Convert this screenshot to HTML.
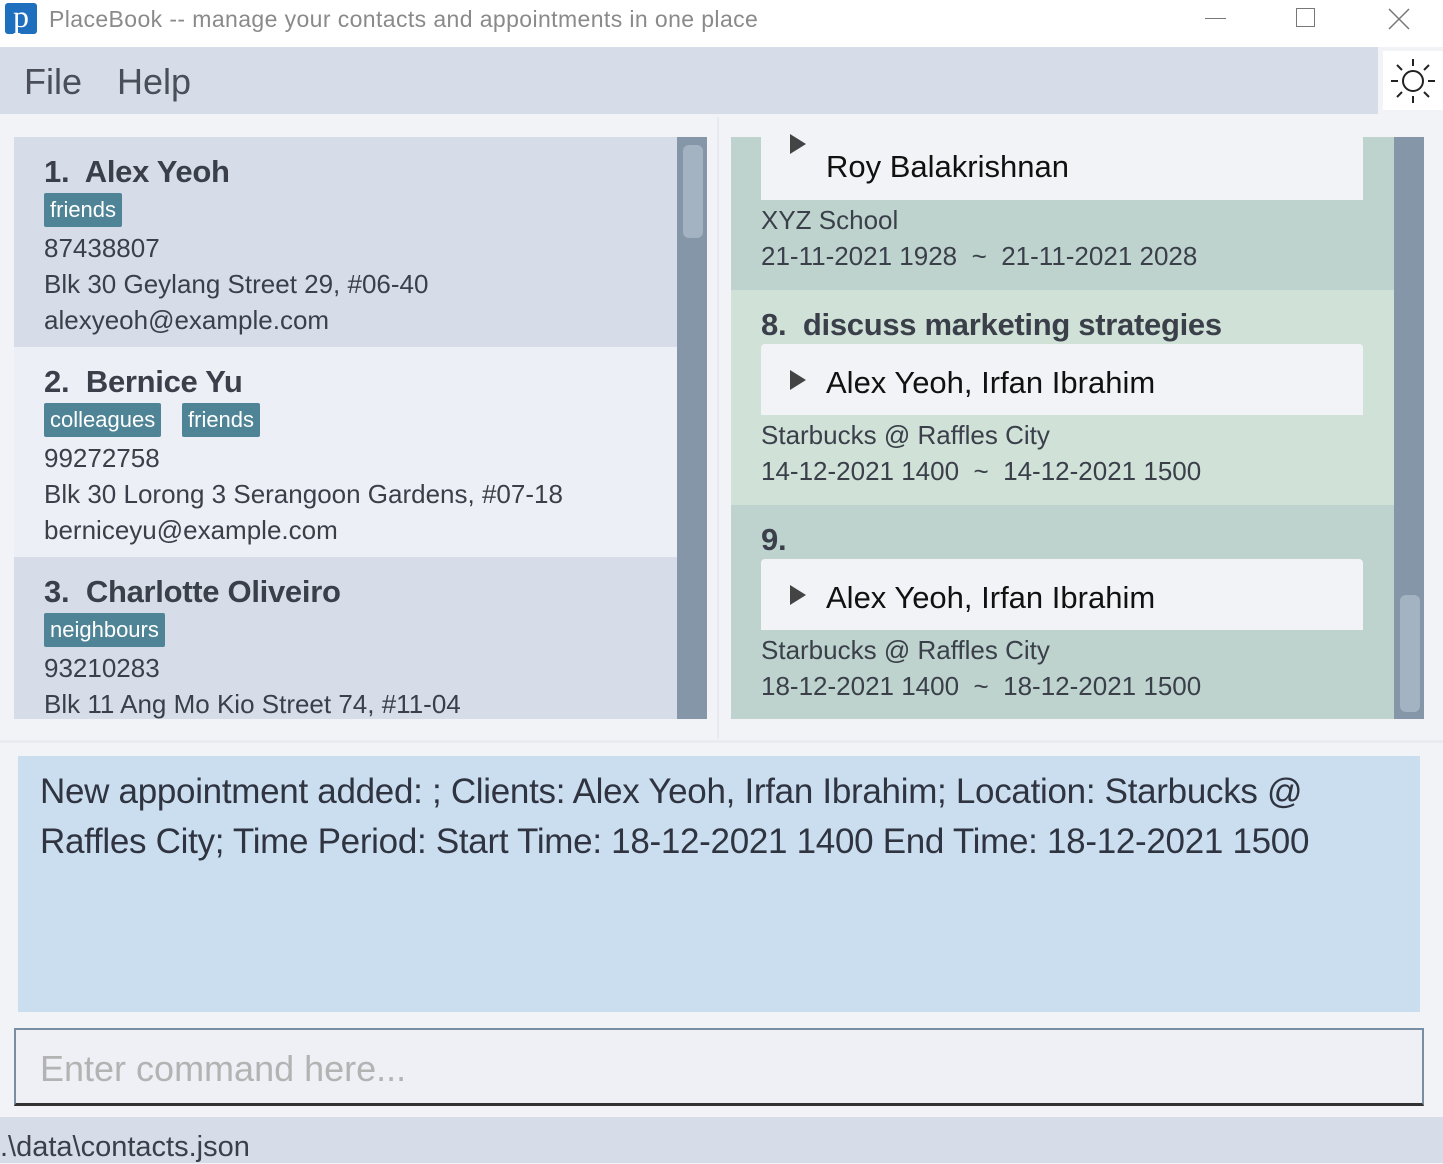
<!DOCTYPE html>
<html><head><meta charset="utf-8"><style>
*{margin:0;padding:0;box-sizing:border-box}
body{width:1443px;height:1163px;position:relative;background:#f1f3f7;font-family:"Liberation Sans","DejaVu Sans",sans-serif;color:#3a3f4a;overflow:hidden}
.a{position:absolute;white-space:nowrap}
.tag{position:absolute;background:#4f8496;color:#fff;font-size:22px;padding:0 6px;height:34px;line-height:33px;border-radius:2px}
.name{font-size:31px;color:#3a3f4a;font-weight:bold;letter-spacing:-0.3px}
.t{font-size:26px;color:#3a3f4a}
.box{position:absolute;left:761px;width:602px;background:#f1f3f7}
.tri{position:absolute;width:0;height:0;border-left:16px solid #444;border-top:10px solid transparent;border-bottom:10px solid transparent}
.cl{font-size:31px;color:#111}
</style></head><body>
<div class="a" style="left:0;top:0;width:1443px;height:47px;background:#fff"></div>
<div class="a" style="left:5px;top:3px;width:32px;height:31px;background:#1f6fbf;border-radius:3px;color:#fff;font-family:'Liberation Serif',serif;font-size:32px;line-height:26px;text-align:center">p</div>
<div class="a" style="left:49px;top:6px;font-size:23px;color:#8a8a8a;letter-spacing:0.4px">PlaceBook -- manage your contacts and appointments in one place</div>
<div class="a" style="left:1205px;top:18px;width:21px;height:1px;background:#777"></div>
<div class="a" style="left:1296px;top:8px;width:19px;height:19px;border:1.5px solid #777"></div>
<svg class="a" style="left:1388px;top:8px" width="22" height="22"><path d="M1 1L21 21M21 1L1 21" stroke="#777" stroke-width="1.5"/></svg>
<div class="a" style="left:0;top:47px;width:1378px;height:67px;background:#d7dde8"></div>
<div class="a" style="left:24px;top:61px;font-size:36px;color:#4a4f5a">File</div>
<div class="a" style="left:117px;top:61px;font-size:36px;color:#4a4f5a">Help</div>
<div class="a" style="left:1383px;top:51px;width:60px;height:59px;background:#fff"></div>
<svg class="a" style="left:1390px;top:58px" width="46" height="46" viewBox="0 0 46 46"><circle cx="23" cy="23" r="10" fill="none" stroke="#222" stroke-width="2"/><g stroke="#222" stroke-width="2"><path d="M23 1v7M23 38v7M1 23h7M38 23h7M7 7l5 5M34 34l5 5M39 7l-5 5M12 34l-5 5"/></g></svg>
<div class="a" style="left:14px;top:137px;width:663px;height:210px;background:#d7dde8"></div>
<div class="a" style="left:14px;top:347px;width:663px;height:210px;background:#eceff5"></div>
<div class="a" style="left:14px;top:557px;width:663px;height:162px;background:#d7dde8"></div>
<div class="a" style="left:677px;top:137px;width:30px;height:582px;background:#8496a8"></div>
<div class="a" style="left:683px;top:145px;width:20px;height:93px;background:#a4b3c1;border-radius:6px"></div>

<div class="a name" style="left:44px;top:154px">1.&nbsp; Alex Yeoh</div>
<div class="tag" style="left:44px;top:193px">friends</div>
<div class="a t" style="left:44px;top:233px">87438807</div>
<div class="a t" style="left:44px;top:269px">Blk 30 Geylang Street 29, #06-40</div>
<div class="a t" style="left:44px;top:305px">alexyeoh@example.com</div>

<div class="a name" style="left:44px;top:364px">2.&nbsp; Bernice Yu</div>
<div class="tag" style="left:44px;top:403px">colleagues</div>
<div class="tag" style="left:182px;top:403px">friends</div>
<div class="a t" style="left:44px;top:443px">99272758</div>
<div class="a t" style="left:44px;top:479px">Blk 30 Lorong 3 Serangoon Gardens, #07-18</div>
<div class="a t" style="left:44px;top:515px">berniceyu@example.com</div>

<div class="a name" style="left:44px;top:574px">3.&nbsp; Charlotte Oliveiro</div>
<div class="tag" style="left:44px;top:613px">neighbours</div>
<div class="a t" style="left:44px;top:653px">93210283</div>
<div class="a t" style="left:44px;top:689px;height:30px;overflow:hidden">Blk 11 Ang Mo Kio Street 74, #11-04</div>
<div class="a" style="left:717px;top:117px;width:2px;height:622px;background:#e6e9ef"></div>

<div class="a" style="left:731px;top:137px;width:663px;height:153px;background:#bed3ce"></div>
<div class="a" style="left:731px;top:290px;width:663px;height:215px;background:#d0e1d8"></div>
<div class="a" style="left:731px;top:505px;width:663px;height:214px;background:#bed3ce"></div>
<div class="a" style="left:1394px;top:137px;width:30px;height:582px;background:#8496a8"></div>
<div class="a" style="left:1400px;top:595px;width:20px;height:117px;background:#a4b3c1;border-radius:6px"></div>

<div class="box" style="top:137px;height:63px"></div>
<div class="tri" style="left:790px;top:134px"></div>
<div class="a cl" style="left:826px;top:149px">Roy Balakrishnan</div>
<div class="a t" style="left:761px;top:205px">XYZ School</div>
<div class="a t" style="left:761px;top:241px">21-11-2021 1928 &nbsp;~&nbsp; 21-11-2021 2028</div>

<div class="a name" style="left:761px;top:307px">8.&nbsp; discuss marketing strategies</div>
<div class="box" style="top:344px;height:71px;border-radius:4px 4px 0 0"></div>
<div class="tri" style="left:790px;top:370px"></div>
<div class="a cl" style="left:826px;top:365px">Alex Yeoh, Irfan Ibrahim</div>
<div class="a t" style="left:761px;top:420px">Starbucks @ Raffles City</div>
<div class="a t" style="left:761px;top:456px">14-12-2021 1400 &nbsp;~&nbsp; 14-12-2021 1500</div>

<div class="a name" style="left:761px;top:522px">9.</div>
<div class="box" style="top:559px;height:71px;border-radius:4px 4px 0 0"></div>
<div class="tri" style="left:790px;top:585px"></div>
<div class="a cl" style="left:826px;top:580px">Alex Yeoh, Irfan Ibrahim</div>
<div class="a t" style="left:761px;top:635px">Starbucks @ Raffles City</div>
<div class="a t" style="left:761px;top:671px">18-12-2021 1400 &nbsp;~&nbsp; 18-12-2021 1500</div>

<div class="a" style="left:0;top:740px;width:1443px;height:3px;background:#e8ebf0"></div>
<div class="a" style="left:18px;top:756px;width:1402px;height:256px;background:#cadef0"></div>
<div class="a" style="left:40px;top:767px;font-size:35px;line-height:50px;color:#2f3440;white-space:normal;width:1370px;letter-spacing:-0.3px">New appointment added: ; Clients: Alex Yeoh, Irfan Ibrahim; Location: Starbucks @<br>Raffles City; Time Period: Start Time: 18-12-2021 1400 End Time: 18-12-2021 1500</div>
<div class="a" style="left:14px;top:1028px;width:1410px;height:78px;background:#eef0f5;border:2px solid #7a8ea3;border-bottom:3px solid #333"></div>
<div class="a" style="left:40px;top:1048px;font-size:36px;color:#b3b3b3">Enter command here...</div>
<div class="a" style="left:0;top:1117px;width:1443px;height:46px;background:#d7dde8"></div>
<div class="a" style="left:0;top:1131px;font-size:29px;color:#3a3f4a">.\data\contacts.json</div>
</body></html>
